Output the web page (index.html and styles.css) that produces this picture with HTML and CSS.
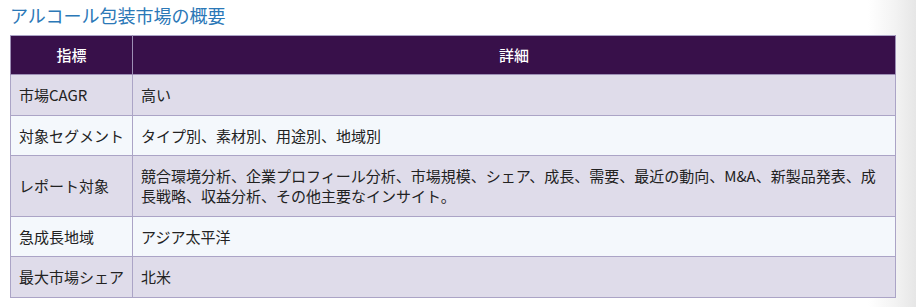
FILE: index.html
```html
<!DOCTYPE html>
<html lang="ja">
<head>
<meta charset="utf-8">
<link rel="stylesheet" href="styles.css">
</head>
<body>
<div class="page">
  <h2 class="title">アルコール包装市場の概要</h2>
  <table class="summary">
    <thead>
      <tr><th class="col-key">指標</th><th>詳細</th></tr>
    </thead>
    <tbody>
      <tr><td class="col-key">市場CAGR</td><td>高い</td></tr>
      <tr><td class="col-key">対象セグメント</td><td>タイプ別、素材別、用途別、地域別</td></tr>
      <tr><td class="col-key">レポート対象</td><td>競合環境分析、企業プロフィール分析、市場規模、シェア、成長、需要、最近の動向、M&amp;A、新製品発表、成長戦略、収益分析、その他主要なインサイト。</td></tr>
      <tr><td class="col-key">急成長地域</td><td>アジア太平洋</td></tr>
      <tr><td class="col-key">最大市場シェア</td><td>北米</td></tr>
    </tbody>
  </table>
</div>
</body>
</html>
```
FILE: styles.css
```css
html, body {
  margin: 0;
  padding: 0;
}
body {
  background: linear-gradient(to right, #ffffff 0, #ffffff 868px, #f3f3f3 895px, #e6e6e6 916px);
  min-height: 307px;
  font-family: "Noto Sans CJK JP", "Noto Sans", sans-serif;
  color: #222;
}
.page {
  padding: 3px 20px 0 10px;
}
.title {
  margin: 0 0 7px 0;
  font-size: 18px;
  line-height: 25px;
  font-weight: 400;
  color: #2b78b7;
}
.summary {
  width: 886px;
  border-collapse: collapse;
  font-size: 15px;
  line-height: 20px;
}
.summary th,
.summary td {
  border: 1px solid #aba4c6;
  padding: 10px 8px 9.5px;
  text-align: left;
  vertical-align: middle;
}
.summary th {
  background: #38104a;
  color: #fff;
  font-weight: 500;
  text-align: center;
  padding: 9px 8px;
  border-color: #9d8fb5;
  border-top-color: #aba4c6;
}
.summary .col-key {
  width: 105px;
  white-space: nowrap;
}
.summary tbody tr:nth-child(odd) td {
  background: #dfdcea;
}
.summary tbody tr:nth-child(even) td {
  background: #f4f8fc;
}
```
